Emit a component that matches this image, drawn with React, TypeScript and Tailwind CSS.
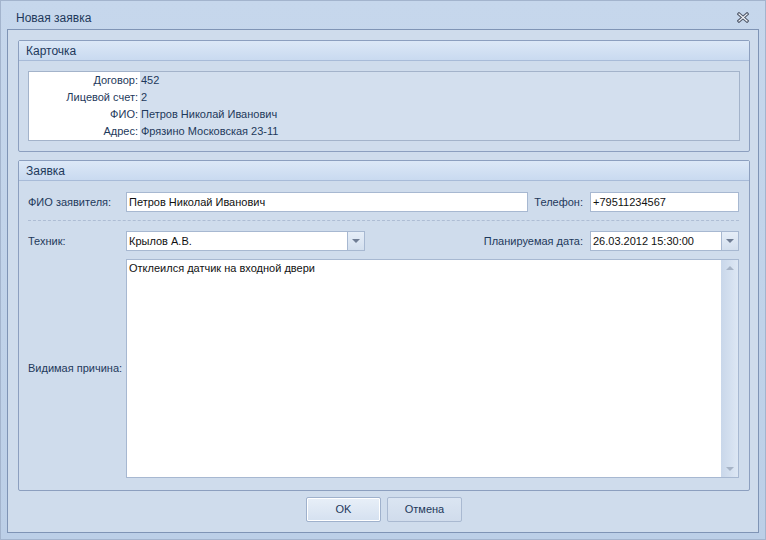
import { ReactNode } from 'react';

const font = { fontFamily: '"Liberation Sans", Arial, sans-serif' };

const Arrow = ({ up = false, color = '#6f7d94' }: { up?: boolean; color?: string }) => (
  <svg width="8" height="4" viewBox="0 0 8 4">
    <path d={up ? 'M0 4 L4 0 L8 4 Z' : 'M0 0 L8 0 L4 4 Z'} fill={color} />
  </svg>
);

const CloseIcon = () => (
  <svg width="12" height="11" viewBox="0 0 12 11">
    <path d="M2 2 L10 9 M10 2 L2 9" stroke="#4f5869" strokeWidth="3.2" strokeLinecap="square" />
    <path d="M2 2 L10 9 M10 2 L2 9" stroke="#f4f6fa" strokeWidth="1.2" strokeLinecap="square" />
  </svg>
);

const GroupBox = ({ title, className, children }: { title: string; className?: string; children: ReactNode }) => (
  <section className={`flex flex-col border border-[#8c9fbf] rounded-[2px] ${className ?? ''}`}>
    <header className="h-[20px] shrink-0 flex items-center px-[7px] text-[12px] text-[#1e395b] bg-gradient-to-b from-[#dce8f7] to-[#c9daf0] border-b border-[#a8bbd8]">
      {title}
    </header>
    {children}
  </section>
);

const TextBox = ({ value, className }: { value: string; className?: string }) => (
  <div className={`h-[20px] flex items-center bg-white border border-[#a7b8d1] px-[2px] text-[11px] text-[#111] ${className ?? ''}`}>
    {value}
  </div>
);

const ComboBox = ({ value, className }: { value: string; className?: string }) => (
  <div className={`h-[20px] flex bg-white border border-[#a7b8d1] text-[11px] text-[#111] ${className ?? ''}`}>
    <span className="flex-1 flex items-center px-[2px]">{value}</span>
    <span className="w-[17px] flex items-center justify-center border-l border-[#a7b8d1] bg-gradient-to-b from-[#e6eef8] to-[#d3dfee]">
      <Arrow />
    </span>
  </div>
);

const cardRows = [
  ['Договор:', '452'],
  ['Лицевой счет:', '2'],
  ['ФИО:', 'Петров Николай Иванович'],
  ['Адрес:', 'Фрязино Московская 23-11'],
];

export default function App() {
  return (
    <div
      className="w-[766px] h-[540px] flex flex-col bg-gradient-to-b from-[#c6d7ec] to-[#bccfe7] border border-[#a3b4cd]"
      style={font}
    >
      {/* title bar */}
      <div className="h-[28px] shrink-0 flex items-center justify-between pl-[15px] pr-[16px]">
        <span className="text-[12px] text-[#1e395b] pt-[6px]">Новая заявка</span>
        <span className="pt-[5px]"><CloseIcon /></span>
      </div>

      {/* client area */}
      <div className="flex-1 mx-[6px] mb-[6px] border border-[#7f94b5] bg-[#cfdcec] flex flex-col pt-[10px] pl-[10px] pr-[8px] pb-[10px]">
        <GroupBox title="Карточка" className="h-[112px] shrink-0">
          <div className="flex-1 p-[9px] pt-[10px]">
            <div className="h-[70px] border border-[#a3b3ca] flex flex-col bg-[#d3dfee]">
              {cardRows.map(([label, value]) => (
                <div key={label} className="h-[17px] flex items-center text-[11px] text-[#1e395b]">
                  <span className="w-[111px] h-full bg-white flex items-center justify-end pr-[2px]">{label}</span>
                  <span className="pl-[1px]">{value}</span>
                </div>
              ))}
            </div>
          </div>
        </GroupBox>

        <GroupBox title="Заявка" className="mt-[8px] flex-1">
          <div className="flex-1 flex flex-col pt-[11px] pb-[12px] pl-[9px] pr-[10px] text-[11px] text-[#1e395b]">
            <div className="flex items-center">
              <span className="w-[98px]">ФИО заявителя:</span>
              <TextBox value="Петров Николай Иванович" className="w-[402px]" />
              <span className="flex-1 text-right pr-[7px]">Телефон:</span>
              <TextBox value="+79511234567" className="w-[149px]" />
            </div>

            <div className="mt-[8px] mb-[10px] border-t border-dashed border-[#aebdd4]" />

            <div className="flex items-center">
              <span className="w-[98px]">Техник:</span>
              <ComboBox value="Крылов А.В." className="w-[239px]" />
              <span className="flex-1 text-right pr-[7px]">Планируемая дата:</span>
              <ComboBox value="26.03.2012 15:30:00" className="w-[149px]" />
            </div>

            <div className="mt-[8px] flex-1 flex items-stretch">
              <span className="w-[98px] self-center">Видимая причина:</span>
              <div className="flex-1 flex bg-white border border-[#a7b8d1]">
                <div className="flex-1 px-[2px] text-[#111] leading-[16px]">Отклеился датчик на входной двери</div>
                <div className="w-[17px] flex flex-col items-center justify-between py-[6px] bg-gradient-to-r from-[#c9d7ea] to-[#dde7f4]">
                  <Arrow up color="#a6b3c6" />
                  <Arrow color="#a6b3c6" />
                </div>
              </div>
            </div>
          </div>
        </GroupBox>

        <div className="mt-[6px] flex justify-center gap-[6px] text-[11px] text-[#1e395b]">
          <button className="w-[75px] h-[25px] rounded-[2px] border border-[#9fb1cc] shadow-[inset_0_0_0_1px_#ffffff] bg-gradient-to-b from-[#e8eff8] to-[#d5e1f0]">
            OK
          </button>
          <button className="w-[75px] h-[25px] rounded-[2px] border border-[#a9b9d1] bg-gradient-to-b from-[#dbe5f2] to-[#d0dcec]">
            Отмена
          </button>
        </div>
      </div>
    </div>
  );
}
